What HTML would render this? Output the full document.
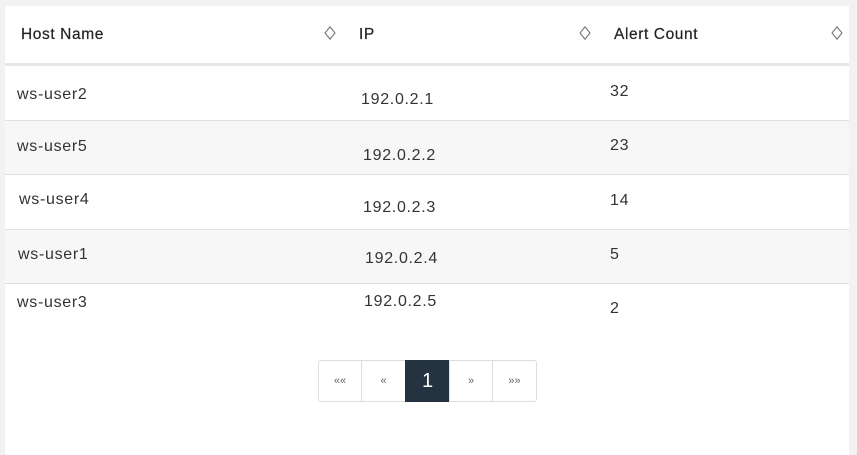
<html><head><style>
body{margin:0;width:857px;height:455px;background:#f2f2f2;font-family:"Liberation Sans",sans-serif;position:relative;overflow:hidden}
.p{position:absolute;left:5px;top:6px;width:844px;height:449px;background:#fff}
.r{position:absolute;left:5px;width:844px}
.t{position:absolute;font-size:16px;color:#333;line-height:18px;letter-spacing:0.7px}
.h{position:absolute;font-size:15.5px;color:#222;font-weight:600;line-height:18px;letter-spacing:0.6px;-webkit-text-stroke:0.2px #222}
.h{font-weight:normal}
.s{position:absolute;width:6px;height:6px;border:1.5px solid #777;transform:scaleY(1.25) rotate(45deg)}
.pg{position:absolute;top:360px;height:42px;border:1px solid #ddd;box-sizing:border-box;font-size:11px;color:#666;text-align:center;line-height:40px;background:#fff}
</style></head><body>
<div class="p"></div>
<div class="r" style="top:63px;height:3px;background:#e6e6e6"></div>
<div class="r" style="top:120px;height:1px;background:#e0e0e0"></div>
<div class="r" style="top:121px;height:53px;background:#f7f7f7"></div>
<div class="r" style="top:174px;height:1px;background:#e0e0e0"></div>
<div class="r" style="top:229px;height:1px;background:#e0e0e0"></div>
<div class="r" style="top:230px;height:53px;background:#f7f7f7"></div>
<div class="r" style="top:283px;height:1px;background:#e0e0e0"></div>
<div class="h" style="left:21px;top:26px">Host Name</div>
<div class="h" style="left:359px;top:26px">IP</div>
<div class="h" style="left:614px;top:26px">Alert Count</div>
<div class="s" style="left:326px;top:29px"></div>
<div class="s" style="left:581px;top:29px"></div>
<div class="s" style="left:833px;top:29px"></div>
<div class="t" style="left:17px;top:86px">ws-user2</div>
<div class="t" style="left:361px;top:91px">192.0.2.1</div>
<div class="t" style="left:610px;top:83px">32</div>
<div class="t" style="left:17px;top:138px">ws-user5</div>
<div class="t" style="left:363px;top:147px">192.0.2.2</div>
<div class="t" style="left:610px;top:137px">23</div>
<div class="t" style="left:19px;top:191px">ws-user4</div>
<div class="t" style="left:363px;top:199px">192.0.2.3</div>
<div class="t" style="left:610px;top:192px">14</div>
<div class="t" style="left:18px;top:246px">ws-user1</div>
<div class="t" style="left:365px;top:250px">192.0.2.4</div>
<div class="t" style="left:610px;top:246px">5</div>
<div class="t" style="left:17px;top:294px">ws-user3</div>
<div class="t" style="left:364px;top:293px">192.0.2.5</div>
<div class="t" style="left:610px;top:300px">2</div>
<div class="pg" style="left:318px;width:44px;border-radius:3px 0 0 3px">««</div>
<div class="pg" style="left:361px;width:45px">«</div>
<div class="pg" style="left:405px;width:45px;background:#253240;border-color:#253240;color:#fff;font-size:20px">1</div>
<div class="pg" style="left:449px;width:44px">»</div>
<div class="pg" style="left:492px;width:45px;border-radius:0 3px 3px 0">»»</div>
</body></html>
